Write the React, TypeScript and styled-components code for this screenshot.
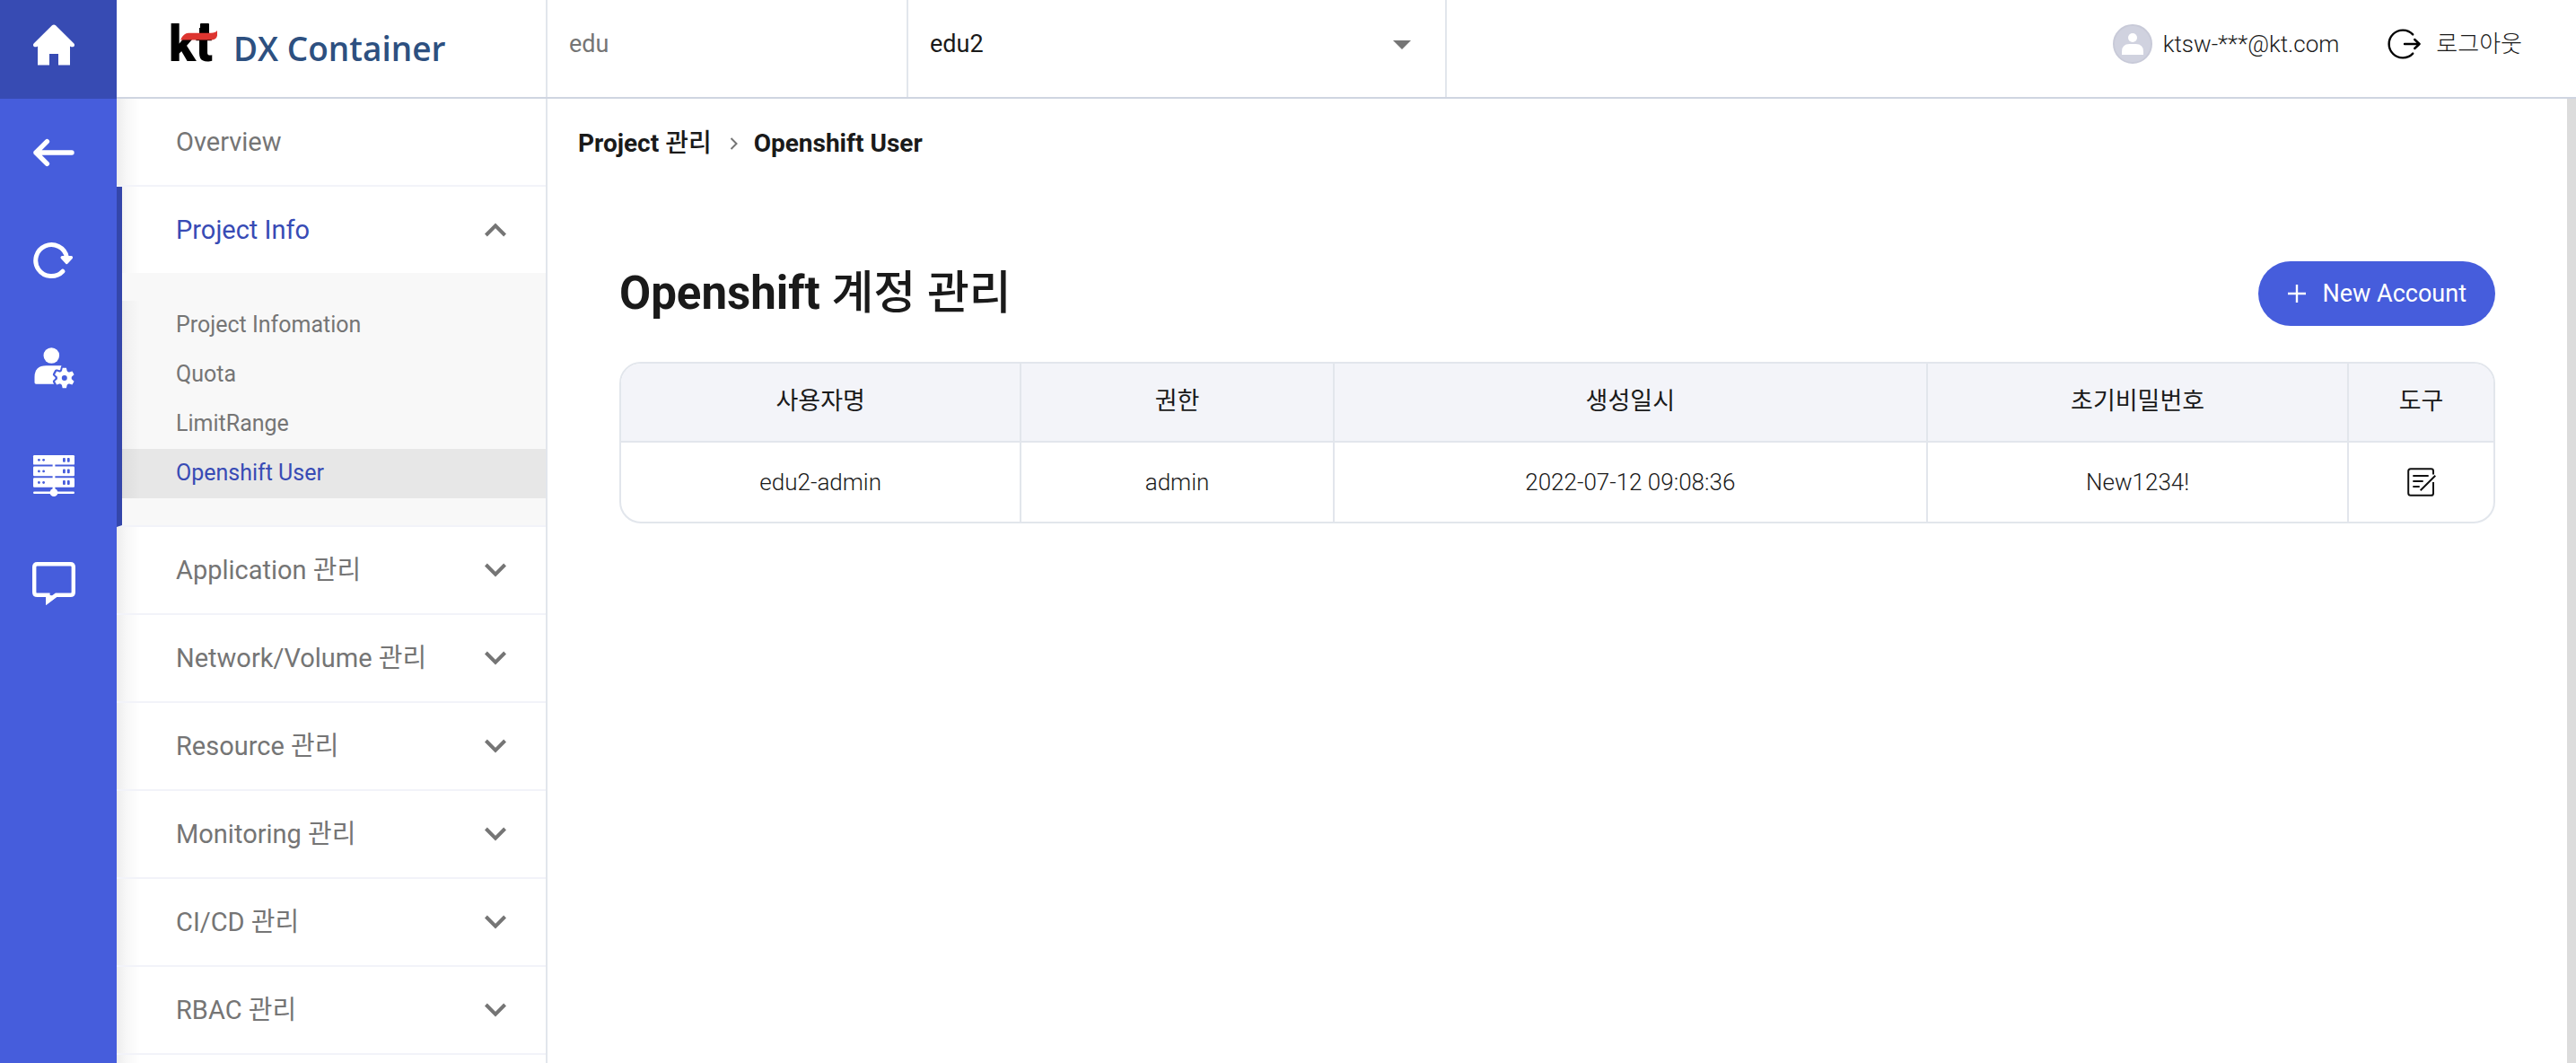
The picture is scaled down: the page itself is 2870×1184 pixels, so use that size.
import React from "react";
import styled, { createGlobalStyle, css } from "styled-components";

const color = {
  rail: "#465ddc",
  railDark: "#374bb3",
  line: "#e2e6ec",
  lineStrong: "#cfd5e1",
  rowLine: "#f2f3f9",
  text: "#1a1a1a",
  muted: "#757575",
  active: "#384bb5",
};

const GlobalStyle = createGlobalStyle`
  *, *::before, *::after { box-sizing: border-box; }
  body {
    margin: 0;
    background: #fff;
    color: ${color.text};
    font-family: Roboto, "Noto Sans CJK KR", sans-serif;
    font-size: 26px;
    line-height: 36px;
  }
  button, input, select { font: inherit; color: inherit; }
  a { color: inherit; text-decoration: none; }
  ul, ol { list-style: none; margin: 0; padding: 0; }
`;

const Shell = styled.div`
  display: grid;
  grid-template-columns: 130px minmax(0, 1fr);
  height: 100vh;
  overflow: hidden;
`;

/* ---------- icon rail ---------- */

const Rail = styled.nav`
  display: flex;
  flex-direction: column;
  background: ${color.rail};
`;

const RailButton = styled.button<{ $home?: boolean }>`
  display: flex;
  align-items: center;
  justify-content: center;
  flex: none;
  height: ${(p) => (p.$home ? 110 : 120)}px;
  padding: ${(p) => (p.$home ? "0 10px 10px 0" : "0 10px 0 0")};
  border: 0;
  background: ${(p) => (p.$home ? color.railDark : "transparent")};
  color: #fff;
  cursor: pointer;
`;

/* ---------- header ---------- */

const Workspace = styled.div`
  display: grid;
  grid-template-rows: 110px minmax(0, 1fr);
  min-width: 0;
`;

const Header = styled.header`
  display: flex;
  border-bottom: 2px solid ${color.lineStrong};
  background: #fff;
`;

const Brand = styled.a`
  display: flex;
  align-items: center;
  gap: 14px;
  width: 480px;
  flex: none;
  padding: 0 0 12px 60px;
  border-right: 2px solid ${color.line};
`;

const BrandName = styled.span`
  padding-top: 12px;
  font-family: "Open Sans", "Noto Sans", sans-serif;
  font-size: 37px;
  font-weight: 600;
  line-height: 48px;
  color: #2d5080;
`;

const LogoSvg = styled.svg`
  flex: none;
  overflow: visible;
`;

const Picker = styled.label<{ $width: number }>`
  display: grid;
  width: ${(p) => p.$width}px;
  flex: none;
  border-right: 2px solid ${color.line};
  & > * { grid-area: 1 / 1; }
  & > svg {
    align-self: center;
    justify-self: end;
    margin: 0 38px 8px 0;
    pointer-events: none;
  }
`;

const fieldStyle = css`
  width: 100%;
  border: 0;
  padding: 0 24px 10px;
  background: transparent;
  outline: none;
  font-size: 27px;
`;

const ClusterInput = styled.input`
  ${fieldStyle}
  color: ${color.muted};
`;

const ProjectSelect = styled.select`
  ${fieldStyle}
  appearance: none;
`;

const Account = styled.div`
  display: flex;
  align-items: center;
  margin-left: auto;
  padding: 0 60px 10px 0;
  font-weight: 300;
`;

const UserName = styled.span`
  margin: 0 54px 0 12px;
`;

const Logout = styled.button`
  display: flex;
  align-items: center;
  gap: 16px;
  padding: 0;
  border: 0;
  background: none;
  cursor: pointer;
`;

/* ---------- side menu ---------- */

const Body = styled.div`
  display: grid;
  grid-template-columns: 480px minmax(0, 1fr) 10px;
  min-height: 0;
`;

const edgeShade = "linear-gradient(90deg, rgba(0,0,0,0.075), rgba(0,0,0,0.03) 10px, rgba(0,0,0,0) 26px)";

const SideMenu = styled.nav`
  overflow: hidden;
  border-right: 2px solid ${color.line};
  background: ${edgeShade} no-repeat #fff;
`;

const MenuGroup = styled.li<{ $open?: boolean }>`
  border-bottom: 2px solid ${color.rowLine};
  ${(p) =>
    p.$open &&
    css`
      border-left: 6px solid #3446aa;
    `}
`;

const MenuItem = styled.button<{ $open?: boolean }>`
  display: flex;
  align-items: center;
  justify-content: space-between;
  width: 100%;
  height: 96px;
  padding: 0 44px 0 ${(p) => (p.$open ? 60 : 66)}px;
  border: 0;
  background: transparent;
  color: ${(p) => (p.$open ? color.active : color.muted)};
  font-size: 29px;
  cursor: pointer;
  & > svg { color: ${color.muted}; }
`;

const SubMenu = styled.div`
  padding: 31px 0 30px;
  background: #f8f8f8;
`;

const SubList = styled.ul`
  background: ${edgeShade} -6px 0 no-repeat;
`;

const SubLink = styled.a<{ $active?: boolean }>`
  display: flex;
  align-items: center;
  height: 55px;
  padding: 0 0 2px 60px;
  background: ${(p) => (p.$active ? "rgba(0,0,0,0.065)" : "transparent")};
  color: ${(p) => (p.$active ? color.active : color.muted)};
  font-size: 25px;
`;

/* ---------- content ---------- */

const Content = styled.main`
  overflow: hidden;
`;

const Breadcrumb = styled.ol`
  display: flex;
  align-items: center;
  height: 100px;
  padding-left: 34px;
  font-size: 28px;
  font-weight: 700;
`;

const Crumb = styled.li`
  display: flex;
  align-items: center;
  & > svg { margin: 0 18px 0 20px; }
`;

const Ko = styled.span`
  font-weight: 500;
`;

const Panel = styled.section`
  padding: 81px 80px 0;
`;

const PanelHead = styled.div`
  display: flex;
  align-items: center;
  justify-content: space-between;
  height: 72px;
  margin-bottom: 40px;
`;

const Title = styled.h1`
  margin: 0;
  font-size: 51px;
  font-weight: 700;
  line-height: 72px;
`;

const NewButton = styled.button`
  display: flex;
  align-items: center;
  gap: 18px;
  height: 72px;
  padding: 0 32px;
  border: 0;
  border-radius: 36px;
  background: ${color.rail};
  color: #fff;
  font-size: 27px;
  cursor: pointer;
`;

const Table = styled.table`
  width: 100%;
  table-layout: fixed;
  border: 2px solid ${color.line};
  border-radius: 24px;
  border-spacing: 0;
  overflow: hidden;
  text-align: center;
`;

const Col = styled.col<{ $share: number }>`
  width: ${(p) => p.$share}%;
`;

const HeadCell = styled.th`
  height: 88px;
  padding: 0 0 2px;
  border-bottom: 2px solid ${color.line};
  background: #f3f4f9;
  font-size: 27px;
  font-weight: 400;
  & + & { border-left: 2px solid ${color.line}; }
`;

const Cell = styled.td`
  height: 88px;
  padding: 0;
  font-weight: 300;
  & + & { border-left: 2px solid ${color.line}; }
`;

const IconButton = styled.button`
  display: flex;
  margin: 0 auto;
  padding: 0;
  border: 0;
  background: none;
  cursor: pointer;
`;

const ScrollTrack = styled.div`
  background: #dcdcdc;
`;

/* ---------- drawings ---------- */

const HomeIcon = () => (
  <svg width="48" height="48" viewBox="0 0 48 48" fill="currentColor" aria-hidden="true">
    <path d="M22 2.2Q24 .6 26 2.2L46.2 22.2Q48 24.4 46 26Q44.4 26.9 42 25.4V46.5H29V34H19V46.5H6V25.4Q3.6 26.9 2 26Q0 24.4 1.8 22.2Z" />
  </svg>
);

const BackIcon = () => (
  <svg width="48" height="48" viewBox="0 0 48 48" fill="none" stroke="currentColor" strokeWidth="5.4" strokeLinecap="round" strokeLinejoin="round" aria-hidden="true">
    <path d="M4 24H44M16.4 11.6L4 24L16.4 36.4" />
  </svg>
);

const ReloadIcon = () => (
  <svg width="48" height="48" viewBox="0 0 48 48" fill="none" stroke="currentColor" strokeLinecap="round" strokeLinejoin="round" aria-hidden="true">
    <path d="M33.9 36.2A17.5 17.5 0 1 1 38.4 20.5" strokeWidth="5" />
    <path d="M33.2 20.8H43.4L38.3 26.4Z" fill="currentColor" strokeWidth="3.4" />
  </svg>
);

const gearTeeth = [0, 60, 120, 180, 240, 300];

const UserGearIcon = () => (
  <svg width="48" height="48" viewBox="0 0 48 48" fill="currentColor" aria-hidden="true">
    <circle cx="21.3" cy="10" r="8.8" />
    <path d="M2.5 40V34Q2.5 21.3 15.5 21.3H32.4V41.7H4.2Q2.5 41.7 2.5 40Z" />
    <g fill={color.rail} stroke={color.rail} strokeWidth="4.6" strokeLinejoin="round">
      <circle cx="35.8" cy="35" r="8" />
      {gearTeeth.map((a) => (
        <path key={a} d="M33.2 28L33.9 23.8H37.7L38.4 28Z" transform={`rotate(${a} 35.8 35)`} />
      ))}
    </g>
    <circle cx="35.8" cy="35" r="5.5" fill="none" stroke="currentColor" strokeWidth="5" />
    {gearTeeth.map((a) => (
      <path key={a} d="M32.6 28.6L33.7 23.8H37.9L39 28.6Z" transform={`rotate(${a} 35.8 35)`} />
    ))}
  </svg>
);

const ServerIcon = () => (
  <svg width="48" height="48" viewBox="0 0 48 48" fill="currentColor" aria-hidden="true">
    <rect x="22.6" y="8" width="2.8" height="34" />
    {[1, 13.6, 26.2].map((y) => (
      <g key={y}>
        <rect x="1" y={y} width="46" height="10.6" rx="1.2" />
        <g fill={color.rail}>
          <circle cx="7.4" cy={y + 5.3} r="1.4" />
          <circle cx="12.6" cy={y + 5.3} r="1.4" />
          <rect x="34" y={y + 2.9} width="2.8" height="4.8" rx="1" />
          <rect x="38.9" y={y + 2.9} width="2.8" height="4.8" rx="1" />
        </g>
      </g>
    ))}
    <rect x="1" y="41.4" width="46" height="2.6" rx="1.3" />
    <circle cx="24" cy="42.7" r="4.4" />
  </svg>
);

const ChatIcon = () => (
  <svg width="48" height="48" viewBox="0 0 48 48" fill="none" stroke="currentColor" strokeWidth="4.4" aria-hidden="true">
    <path d="M5.6 2.2H42.4Q45.8 2.2 45.8 5.6V33.4Q45.8 36.8 42.4 36.8H26.6L17.4 43.6V36.8H5.6Q2.2 36.8 2.2 33.4V5.6Q2.2 2.2 5.6 2.2Z" />
    <path d="M15.2 36V48L27.5 38.6Z" fill="currentColor" stroke="none" />
  </svg>
);

const KtLogo = () => (
  <LogoSvg width="56" height="44" viewBox="0 0 56 44" role="img" aria-label="kt">
    <text x="-2" y="42" fontFamily="Roboto, sans-serif" fontSize="55" fontWeight="900" fill="#000">kt</text>
    <rect x="33" y="0" width="10" height="14" rx="1" fill="#000" />
    <path d="M11 18.4Q14.5 11 20 10.8H45Q50 10.6 52 8V13.5Q51.4 18 46 18.4Z" fill="#dd3530" />
  </LogoSvg>
);

const Chevron = ({ up }: { up?: boolean }) => (
  <svg width="24" height="16" viewBox="0 0 24 16" fill="none" stroke="currentColor" strokeWidth="4" aria-hidden="true">
    <path d={up ? "M1.4 14L12 3.4L22.6 14" : "M1.4 2L12 12.6L22.6 2"} />
  </svg>
);

const Caret = () => (
  <svg width="20" height="10" viewBox="0 0 20 10" aria-hidden="true">
    <path d="M0 0H20L10 10Z" fill="#757575" />
  </svg>
);

const Avatar = () => (
  <svg width="44" height="44" viewBox="0 0 44 44" aria-hidden="true">
    <circle cx="22" cy="22" r="21" fill="#d0d2df" stroke="#c8cad8" strokeWidth="2" />
    <circle cx="22" cy="15" r="5" fill="#fff" />
    <path d="M10 34V30.5Q10 22 18.5 22H25.5Q34 22 34 30.5V34Z" fill="#fff" />
  </svg>
);

const LogoutIcon = () => (
  <svg width="38" height="36" viewBox="0 0 38 36" fill="none" stroke="#000" strokeWidth="2.4" strokeLinecap="round" strokeLinejoin="round" aria-hidden="true">
    <path d="M28.2 7.4A15.4 15.4 0 1 0 28.2 28.6" />
    <path d="M19 18H35.6M30.2 13L35.6 18L30.2 23" />
  </svg>
);

const CrumbArrow = () => (
  <svg width="9" height="14" viewBox="0 0 9 14" fill="none" stroke="#757575" strokeWidth="2" aria-hidden="true">
    <path d="M1.5 1L7.5 7L1.5 13" />
  </svg>
);

const PlusIcon = () => (
  <svg width="22" height="22" viewBox="0 0 22 22" stroke="currentColor" strokeWidth="2.4" aria-hidden="true">
    <path d="M1 11H21M11 1V21" />
  </svg>
);

const EditIcon = () => (
  <svg width="32" height="32" viewBox="0 0 32 32" fill="none" stroke="#111" strokeWidth="2" aria-hidden="true">
    <path d="M29 7.5V3.6Q29 1.2 26.6 1.2H3.8Q1.2 1.2 1.2 3.8V28.2Q1.2 30.8 3.8 30.8H26.6Q29 30.8 29 28.4V16" />
    <path d="M6.3 9H23.7M6.3 15H17.7M6.3 21H13.7M14.7 25.3L31.3 8.7" />
  </svg>
);

/* ---------- data ---------- */

type Group = { label: string; children?: string[]; leaf?: boolean };

const groups: Group[] = [
  { label: "Overview", leaf: true },
  { label: "Project Info", children: ["Project Infomation", "Quota", "LimitRange", "Openshift User"] },
  { label: "Application 관리" },
  { label: "Network/Volume 관리" },
  { label: "Resource 관리" },
  { label: "Monitoring 관리" },
  { label: "CI/CD 관리" },
  { label: "RBAC 관리" },
];

const columns = [
  { label: "사용자명", share: 21.3 },
  { label: "권한", share: 16.7 },
  { label: "생성일시", share: 31.7 },
  { label: "초기비밀번호", share: 22.5 },
  { label: "도구", share: 7.8 },
];

const rows = [["edu2-admin", "admin", "2022-07-12 09:08:36", "New1234!"]];

export default function App() {
  return (
    <>
      <GlobalStyle />
      <Shell>
        <Rail aria-label="Shortcuts">
          <RailButton $home aria-label="Home"><HomeIcon /></RailButton>
          <RailButton aria-label="Back"><BackIcon /></RailButton>
          <RailButton aria-label="Reload"><ReloadIcon /></RailButton>
          <RailButton aria-label="User settings"><UserGearIcon /></RailButton>
          <RailButton aria-label="Servers"><ServerIcon /></RailButton>
          <RailButton aria-label="Messages"><ChatIcon /></RailButton>
        </Rail>

        <Workspace>
          <Header>
            <Brand href="#">
              <KtLogo />
              <BrandName>DX Container</BrandName>
            </Brand>
            <Picker $width={402}>
              <ClusterInput aria-label="Cluster" readOnly value="edu" />
            </Picker>
            <Picker $width={600}>
              <ProjectSelect aria-label="Project" defaultValue="edu2">
                <option>edu2</option>
              </ProjectSelect>
              <Caret />
            </Picker>
            <Account>
              <Avatar />
              <UserName>ktsw-***@kt.com</UserName>
              <Logout>
                <LogoutIcon />
                로그아웃
              </Logout>
            </Account>
          </Header>

          <Body>
            <SideMenu aria-label="Menu">
              <ul>
                {groups.map((g) => (
                  <MenuGroup key={g.label} $open={!!g.children}>
                    <MenuItem $open={!!g.children}>
                      {g.label}
                      {!g.leaf && <Chevron up={!!g.children} />}
                    </MenuItem>
                    {g.children && (
                      <SubMenu>
                        <SubList>
                          {g.children.map((c) => (
                            <li key={c}>
                              <SubLink href="#" $active={c === "Openshift User"}>{c}</SubLink>
                            </li>
                          ))}
                        </SubList>
                      </SubMenu>
                    )}
                  </MenuGroup>
                ))}
              </ul>
            </SideMenu>

            <Content>
              <Breadcrumb>
                <Crumb><span>Project <Ko>관리</Ko></span><CrumbArrow /></Crumb>
                <Crumb>Openshift User</Crumb>
              </Breadcrumb>
              <Panel>
                <PanelHead>
                  <Title>Openshift <Ko>계정 관리</Ko></Title>
                  <NewButton><PlusIcon />New Account</NewButton>
                </PanelHead>
                <Table>
                  <colgroup>
                    {columns.map((c) => <Col key={c.label} $share={c.share} />)}
                  </colgroup>
                  <thead>
                    <tr>{columns.map((c) => <HeadCell key={c.label} scope="col">{c.label}</HeadCell>)}</tr>
                  </thead>
                  <tbody>
                    {rows.map((r) => (
                      <tr key={r[0]}>
                        {r.map((v) => <Cell key={v}>{v}</Cell>)}
                        <Cell><IconButton aria-label="Edit"><EditIcon /></IconButton></Cell>
                      </tr>
                    ))}
                  </tbody>
                </Table>
              </Panel>
            </Content>
            <ScrollTrack />
          </Body>
        </Workspace>
      </Shell>
    </>
  );
}
